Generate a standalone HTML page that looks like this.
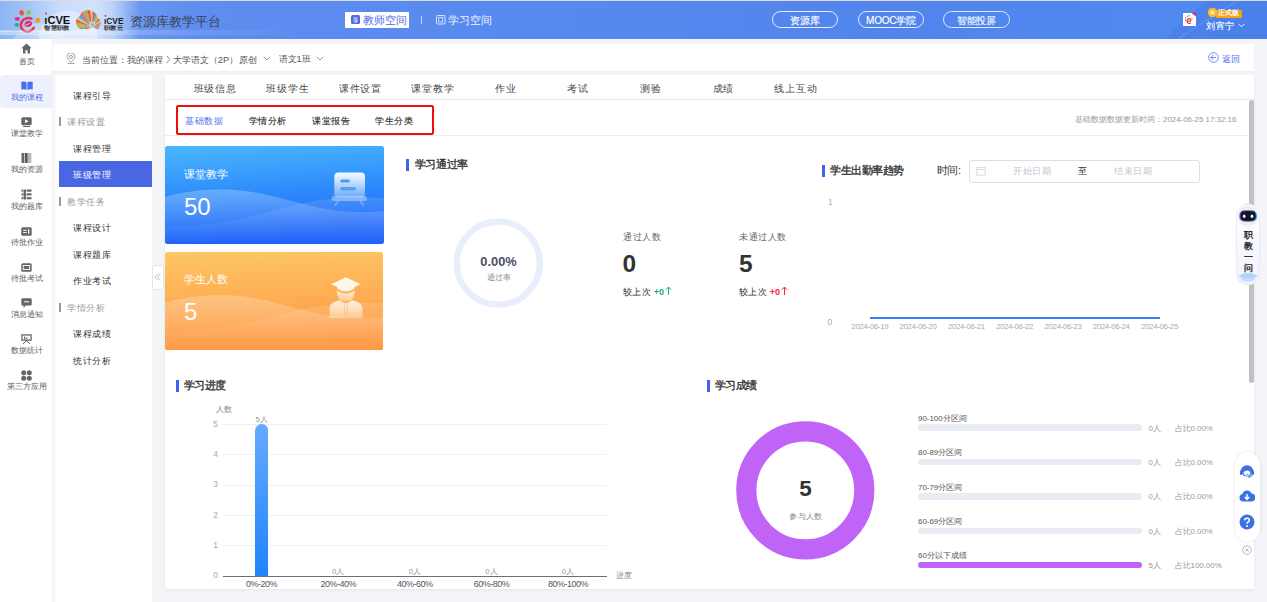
<!DOCTYPE html>
<html><head><meta charset="utf-8">
<style>
*{margin:0;padding:0;box-sizing:border-box}
html,body{width:1267px;height:602px;overflow:hidden}
body{position:relative;background:#f4f5f9;font-family:"Liberation Sans",sans-serif;color:#333}
.a{position:absolute;white-space:nowrap;line-height:1}
#topline{left:0;top:0;width:1267px;height:1px;background:#dedbe8}
#hdr{left:0;top:1px;width:1267px;height:38px;overflow:hidden;
 background:linear-gradient(90deg,#8db5f2 0px,#a5c6f5 30px,#c9ddfa 60px,#d0e2fb 95px,#bed5f8 112px,#8fb3f3 127px,#6996f0 140px,#5d8def 200px,#5788ee 600px,#4a80ea 1267px)}
#side{left:0;top:39px;width:53px;height:563px;background:#fff;box-shadow:1px 0 2px rgba(0,0,0,.04)}
#crumb{left:53px;top:44px;width:1201px;height:27px;background:#fff;box-shadow:0 1px 2px rgba(0,0,0,.04)}
#sub{left:53px;top:75px;width:99px;height:527px;background:#fff}
#main{left:165px;top:75px;width:1089px;height:514px;background:#fff;box-shadow:0 1px 3px rgba(0,0,0,.07)}
</style></head><body>
<div class="a" id="topline"></div>
<div class="a" id="hdr"></div>
<div class="a" id="side"></div>
<div class="a" id="crumb"></div>
<div class="a" id="sub"></div>
<div class="a" id="main"></div>
<div class="a" style="left:50px;top:39px;width:3px;height:563px;background:linear-gradient(90deg,rgba(0,0,0,0),rgba(0,0,0,.03))"></div>
<div class="a" style="left:53px;top:75px;width:4px;height:527px;background:linear-gradient(90deg,rgba(0,0,0,.045),rgba(0,0,0,0))"></div>

<!-- header content -->
<svg class="a" style="left:0;top:1px" width="260" height="38" viewBox="0 0 260 38">
 <defs>
  <clipPath id="shell"><path d="M80 28 C74 24 75 17 80 15 C81 10 86 8.5 90 9.5 C95 10.5 97 14 97.5 17 C101 17.5 101.5 24 99 27 L98 28Z"/></clipPath>
  <radialGradient id="cloud" cx="0.5" cy="1" r="0.8"><stop offset="0" stop-color="#fff" stop-opacity="0.9"/><stop offset="1" stop-color="#fff" stop-opacity="0"/></radialGradient>
 </defs>
 <circle cx="68" cy="40" r="30" fill="#fff" opacity="0.35"/><circle cx="40" cy="52" r="30" fill="#fff" opacity="0.25"/>
 <rect x="0" y="30" width="60" height="1" fill="#fff" opacity="0.3"/>
 <!-- logo1 -->
 <ellipse cx="21.6" cy="11.8" rx="2.2" ry="2.8" fill="#f0513f" transform="rotate(-20 21.6 11.8)"/>
 <ellipse cx="28.8" cy="11.6" rx="2.2" ry="2.5" fill="#8dc63f"/>
 <ellipse cx="17.3" cy="17.8" rx="2.6" ry="1.9" fill="#e2278b"/>
 <ellipse cx="16.8" cy="23.8" rx="2.3" ry="1.9" fill="#1fb28f"/>
 <ellipse cx="37.6" cy="19.3" rx="2.4" ry="2.6" fill="#f59c1a"/>
 <path d="M31.5 17.6 C26 15.5 20.5 19.5 20.8 24.5 C21 29 25.5 31.5 29.5 30.3 C31.5 29.7 33 28.3 33.8 26.8" stroke="#e8304f" stroke-width="2.3" fill="none" stroke-linecap="round"/>
 <path d="M24.5 24.3 C24.5 20.5 28.5 18.8 31 20.5 C33 22 31.8 25.2 28.8 25.8 C27 26.1 25.7 25.6 24.5 24.3Z" fill="#e3246a"/>
 <path d="M25.5 24.2 C27.5 23.5 29 22.8 30.2 21.8" stroke="#fff" stroke-width="0.8" fill="none"/>
 <!-- iCVE text 1 -->
 <circle cx="46" cy="12.5" r="1" fill="#e6262e"/>
 <text x="44.3" y="22.6" font-family="Liberation Sans" font-weight="bold" font-size="10.5" fill="#111" textLength="26" lengthAdjust="spacingAndGlyphs">ıCVE</text>
 <text x="44.3" y="29" font-size="6" font-weight="bold" fill="#333" textLength="25.5" lengthAdjust="spacingAndGlyphs">智慧职教</text>
 <!-- shell logo -->
 <g clip-path="url(#shell)"><path d="M92 26 L66.0 41.0 L63.9 36.5Z" fill="#f2c230"/><path d="M92 26 L63.9 36.5 L62.6 31.7Z" fill="#e8457a"/><path d="M92 26 L62.6 31.7 L62.0 26.8Z" fill="#37b8a8"/><path d="M92 26 L62.0 26.8 L62.3 21.8Z" fill="#f59a2e"/><path d="M92 26 L62.3 21.8 L63.4 17.0Z" fill="#8cc63f"/><path d="M92 26 L63.4 17.0 L65.3 12.4Z" fill="#ef4d6a"/><path d="M92 26 L65.3 12.4 L67.9 8.2Z" fill="#f7c843"/><path d="M92 26 L67.9 8.2 L71.2 4.4Z" fill="#2fb1d6"/><path d="M92 26 L71.2 4.4 L75.0 1.3Z" fill="#e45c9c"/><path d="M92 26 L75.0 1.3 L79.3 -1.2Z" fill="#f08a3a"/><path d="M92 26 L79.3 -1.2 L84.0 -2.9Z" fill="#7cc54a"/><path d="M92 26 L84.0 -2.9 L88.9 -3.8Z" fill="#e9436f"/><path d="M92 26 L88.9 -3.8 L93.8 -3.9Z" fill="#f2c230"/><path d="M92 26 L93.8 -3.9 L98.7 -3.2Z" fill="#e8457a"/><path d="M92 26 L98.7 -3.2 L103.5 -1.7Z" fill="#37b8a8"/><path d="M92 26 L103.5 -1.7 L107.9 0.6Z" fill="#f59a2e"/><path d="M92 26 L107.9 0.6 L111.9 3.5Z" fill="#8cc63f"/><path d="M92 26 L111.9 3.5 L115.3 7.1Z" fill="#ef4d6a"/><path d="M92 26 L115.3 7.1 L118.1 11.2Z" fill="#f7c843"/><path d="M92 26 L118.1 11.2 L120.2 15.7Z" fill="#2fb1d6"/><path d="M92 26 L120.2 15.7 L121.5 20.5Z" fill="#e45c9c"/><path d="M92 26 L121.5 20.5 L122.0 25.5Z" fill="#f08a3a"/><path d="M92 26 L122.0 25.5 L121.7 30.4Z" fill="#7cc54a"/><path d="M92 26 L121.7 30.4 L120.5 35.3Z" fill="#e9436f"/></g>
 <path d="M95 24 C95 21 91 20.5 90 23 C89 25.5 92 27 94 25.5" stroke="#b9e4f5" stroke-width="1.3" fill="none"/>
 <circle cx="105.5" cy="14.8" r="0.9" fill="#e6262e"/>
 <text x="104" y="22.6" font-family="Liberation Sans" font-weight="bold" font-size="9.8" fill="#1a1a1a" textLength="19.5" lengthAdjust="spacingAndGlyphs">ıCVE</text>
 <text x="104" y="29" font-size="6" font-weight="bold" fill="#333" textLength="19" lengthAdjust="spacingAndGlyphs">职教云</text>
</svg>
<div class="a" style="left:0;top:30px;width:300px;height:5px;background:linear-gradient(90deg,rgba(255,255,255,.35),rgba(255,255,255,.15) 150px,rgba(255,255,255,0) 300px)"></div>
<div class="a" style="left:130px;top:14.5px;font-size:13.2px;color:#3c414c">资源库教学平台</div>
<div class="a" style="left:345px;top:12px;width:64px;height:16px;background:#fff;border-radius:1px"></div>
<svg class="a" style="left:351px;top:15px" width="10" height="10" viewBox="0 0 10 10"><rect x="0" y="0" width="9" height="9" rx="1.5" fill="#4f6ce6"/><path d="M2.5 3 H6.5 M2.5 5 H6.5 L5 7 M3 7 H6" stroke="#fff" stroke-width="0.9" fill="none"/></svg>
<div class="a" style="left:363px;top:14.5px;font-size:10.6px;color:#4f6ce6">教师空间</div>
<div class="a" style="left:421px;top:16px;width:1px;height:8px;background:#c9d8fa"></div>
<svg class="a" style="left:436px;top:15px" width="10" height="10" viewBox="0 0 10 10"><rect x="0.5" y="0.5" width="8.5" height="8.5" rx="1" fill="none" stroke="#e3ebfd" stroke-width="0.9"/><rect x="2.7" y="2.5" width="4" height="4.5" fill="none" stroke="#e3ebfd" stroke-width="0.8"/></svg>
<div class="a" style="left:448px;top:14.5px;font-size:10.6px;color:#eef3fe">学习空间</div>
<div class="a" style="left:772px;top:11px;width:66px;height:17px;border:1px solid #e6eeff;border-radius:9px"></div>
<div class="a" style="left:858px;top:11px;width:66px;height:17px;border:1px solid #e6eeff;border-radius:9px"></div>
<div class="a" style="left:943px;top:11px;width:67px;height:17px;border:1px solid #e6eeff;border-radius:9px"></div>
<div class="a" style="left:772px;top:15.8px;width:66px;text-align:center;font-size:10px;letter-spacing:-0.2px;color:#fff;-webkit-text-stroke:0.15px #fff">资源库</div>
<div class="a" style="left:858px;top:15.8px;width:66px;text-align:center;font-size:10px;letter-spacing:-0.2px;color:#fff;-webkit-text-stroke:0.15px #fff">MOOC学院</div>
<div class="a" style="left:943px;top:15.8px;width:67px;text-align:center;font-size:10px;letter-spacing:-0.2px;color:#fff;-webkit-text-stroke:0.15px #fff">智能投屏</div>
<svg class="a" style="left:900px;top:1px" width="367" height="38" viewBox="0 0 367 38">
 <defs><linearGradient id="hl" x1="0" y1="0" x2="1" y2="0"><stop offset="0" stop-color="#5aa0ff" stop-opacity="0"/><stop offset="1" stop-color="#5aa0ff" stop-opacity="0.3"/></linearGradient></defs>
 <path d="M0 0 L305 0 L264.6 38 L0 38Z" fill="url(#hl)"/>
 <path d="M277.6 38 L336.5 0" stroke="#8cc0ff" stroke-opacity="0.45" stroke-width="0.8"/>
</svg>
<div class="a" style="left:1183px;top:13px;width:13px;height:13px;background:#fff"></div>
<svg class="a" style="left:1183px;top:13px" width="13" height="13" viewBox="0 0 13 13">
 <path d="M8.5 0 H13 V3.5Z" fill="#e0245e"/>
 <circle cx="4.5" cy="3.2" r="0.8" fill="#f15a4a"/><circle cx="6.5" cy="2.6" r="0.8" fill="#8cc63f"/>
 <circle cx="2.5" cy="5" r="0.7" fill="#e94f9b"/><circle cx="2.5" cy="7.2" r="0.7" fill="#2bb5a0"/><circle cx="9" cy="5.6" r="0.8" fill="#f7a42a"/>
 <path d="M4.5 9 C3 6 7 4.5 7.8 6.6 C8.5 8.4 6 9 5.4 7.6 M4 7 C3.5 10 6 11 8 10" stroke="#e8384f" stroke-width="1.2" fill="none"/>
</svg>
<div class="a" style="left:1216px;top:9.5px;width:26px;height:8px;background:#f6a315;border-radius:1px"></div>
<svg class="a" style="left:1207px;top:7px" width="11" height="12" viewBox="0 0 11 12"><circle cx="5.5" cy="5.5" r="4.8" fill="#f8b632"/><circle cx="5.5" cy="5.5" r="2.8" fill="#fcd25c"/><path d="M5.5 3.8 L6 5 L7.2 5.1 L6.3 5.9 L6.6 7.1 L5.5 6.4 L4.4 7.1 L4.7 5.9 L3.8 5.1 L5 5Z" fill="#fff"/></svg>
<div class="a" style="left:1218px;top:10px;font-size:6.8px;color:#fff;font-weight:bold">正式版</div>
<div class="a" style="left:1206px;top:22px;font-size:9px;letter-spacing:0.5px;color:#fff;-webkit-text-stroke:0.15px #fff">刘宵宁</div>
<svg class="a" style="left:1238px;top:23px" width="7" height="5" viewBox="0 0 7 5"><path d="M0.8 1 L3.5 3.8 L6.2 1" stroke="#fff" stroke-width="0.9" fill="none"/></svg>


<!-- sidebar -->
<div class="a" style="left:0;top:75px;width:53px;height:33px;background:#edf1fd;border-radius:4px 0 0 4px"></div>
<svg class="a" style="left:21px;top:43px" width="11" height="11" viewBox="0 0 11 11"><path d="M5.5 0.5 L10.6 5.2 L9 5.2 L9 10.5 L6.6 10.5 L6.6 7.3 L4.4 7.3 L4.4 10.5 L2 10.5 L2 5.2 L0.4 5.2Z" fill="#666"/></svg>
<div class="a" style="left:18.5px;top:57.8px;font-size:7.9px;color:#5c5c5c">首页</div>
<svg class="a" style="left:20.5px;top:81px" width="12" height="9" viewBox="0 0 12 9"><path d="M0.3 1 Q3 0 5.6 1.2 L5.6 8.8 Q3 7.8 0.3 8.6Z M6.4 1.2 Q9 0 11.7 1 L11.7 8.6 Q9 7.8 6.4 8.8Z" fill="#4d6ef0"/></svg>
<div class="a" style="left:10.5px;top:93.6px;font-size:7.9px;color:#4d6ef0">我的课程</div>
<svg class="a" style="left:21px;top:116.5px" width="11" height="10" viewBox="0 0 11 10"><rect x="0.3" y="0.3" width="10.4" height="8" rx="1.5" fill="#666"/><path d="M4 2.3 L7.5 4.3 L4 6.3Z" fill="#fff"/><rect x="2" y="9" width="7" height="1" fill="#666"/></svg>
<div class="a" style="left:10.5px;top:129.6px;font-size:7.9px;color:#5c5c5c">课堂教学</div>
<svg class="a" style="left:21px;top:152.5px" width="11" height="10" viewBox="0 0 11 10"><rect x="0.5" y="0" width="2.8" height="10" fill="#666"/><rect x="3.9" y="0" width="2.8" height="10" fill="#5a5a5a"/><rect x="7.4" y="0" width="1.2" height="10" fill="#888"/><rect x="9.2" y="0" width="1.1" height="10" fill="#aaa"/></svg>
<div class="a" style="left:10.5px;top:166.3px;font-size:7.9px;color:#5c5c5c">我的资源</div>
<svg class="a" style="left:21px;top:188.5px" width="11" height="11" viewBox="0 0 11 11"><rect x="0.5" y="0.5" width="10" height="2.2" fill="#666"/><rect x="0.5" y="4.3" width="10" height="2.2" fill="#666"/><rect x="0.5" y="8.1" width="10" height="2.2" fill="#666"/><rect x="1.9" y="0" width="0.7" height="11" fill="#fff"/><rect x="4.9" y="0" width="0.7" height="11" fill="#fff"/><rect x="2.6" y="1" width="2.3" height="9.5" rx="1" fill="#666"/></svg>
<div class="a" style="left:10.5px;top:202.8px;font-size:7.9px;color:#5c5c5c">我的题库</div>
<svg class="a" style="left:21px;top:226.5px" width="11" height="9" viewBox="0 0 11 9"><rect x="0.3" y="0.3" width="10.4" height="8.4" rx="1.5" fill="#666"/><rect x="2.2" y="2.8" width="3.4" height="1" fill="#fff"/><rect x="2.2" y="5" width="3.4" height="1" fill="#fff"/><rect x="7" y="2.3" width="1.3" height="4.4" fill="#fff"/></svg>
<div class="a" style="left:10.5px;top:238.8px;font-size:7.9px;color:#5c5c5c">待批作业</div>
<svg class="a" style="left:21px;top:262.5px" width="11" height="9" viewBox="0 0 11 9"><rect x="0.3" y="0.3" width="10.4" height="8.4" rx="1.5" fill="#666"/><rect x="2.2" y="2.5" width="6.5" height="4" fill="none" stroke="#fff" stroke-width="0.9"/></svg>
<div class="a" style="left:10.5px;top:274.8px;font-size:7.9px;color:#5c5c5c">待批考试</div>
<svg class="a" style="left:21px;top:298px" width="11" height="10" viewBox="0 0 11 10"><path d="M1.5 0.3 H9.5 Q10.7 0.3 10.7 1.5 V6.3 Q10.7 7.5 9.5 7.5 H5 L2.5 9.7 V7.5 H1.5 Q0.3 7.5 0.3 6.3 V1.5 Q0.3 0.3 1.5 0.3Z" fill="#666"/><rect x="3" y="3.3" width="5" height="1" fill="#fff"/></svg>
<div class="a" style="left:10.5px;top:310.8px;font-size:7.9px;color:#5c5c5c">消息通知</div>
<svg class="a" style="left:21px;top:334px" width="11" height="10" viewBox="0 0 11 10"><rect x="0.3" y="0.3" width="10.4" height="6.5" fill="#666"/><rect x="1.6" y="1.6" width="7.8" height="3.9" fill="#fff"/><rect x="3" y="2.5" width="1.2" height="3" fill="#666"/><rect x="5.2" y="3.3" width="1.2" height="2.2" fill="#666"/><path d="M5.5 6.8 L2 9.8 M5.5 6.8 L9 9.8" stroke="#666" stroke-width="1"/></svg>
<div class="a" style="left:10.5px;top:346.8px;font-size:7.9px;color:#5c5c5c">数据统计</div>
<svg class="a" style="left:21px;top:370px" width="11" height="11" viewBox="0 0 11 11"><circle cx="2.7" cy="2.7" r="2.5" fill="#666"/><circle cx="8.3" cy="2.7" r="2.5" fill="#666"/><circle cx="2.7" cy="8.3" r="2.5" fill="#666"/><circle cx="8.3" cy="8.3" r="2.5" fill="#666"/></svg>
<div class="a" style="left:6.5px;top:382.8px;font-size:7.9px;color:#5c5c5c">第三方应用</div>

<!-- breadcrumb -->
<svg class="a" style="left:66px;top:52.5px" width="10" height="11" viewBox="0 0 10 11"><path d="M5 9.3 C2 6.5 1 5 1 3.8 A4 4 0 0 1 9 3.8 C9 5 8 6.5 5 9.3Z" fill="none" stroke="#888" stroke-width="0.8"/><circle cx="5" cy="3.9" r="1.5" fill="none" stroke="#888" stroke-width="0.8"/><path d="M1.5 10.4 H8.5" stroke="#888" stroke-width="0.8"/></svg>
<div class="a" style="left:82px;top:55px;font-size:9.2px;color:#555">当前位置：我的课程<svg style="display:inline-block;vertical-align:-1px;margin:0 2.5px 0 2.5px" width="4.5" height="9" viewBox="0 0 4.5 9"><path d="M0.6 0.8 L3.9 4.5 L0.6 8.2" stroke="#666" stroke-width="0.8" fill="none"/></svg>大学语文<span style="letter-spacing:0.2px">（2P）</span>原创</div>
<div class="a" style="left:278.5px;top:55px;font-size:9.2px;color:#555">语文1班</div>
<svg class="a" style="left:263px;top:56px" width="8" height="5" viewBox="0 0 8 5"><path d="M0.7 0.7 L4 4 L7.3 0.7" stroke="#888" stroke-width="0.8" fill="none"/></svg>
<svg class="a" style="left:316px;top:56px" width="8" height="5" viewBox="0 0 8 5"><path d="M0.7 0.7 L4 4 L7.3 0.7" stroke="#888" stroke-width="0.8" fill="none"/></svg>
<svg class="a" style="left:1208px;top:52px" width="11" height="11" viewBox="0 0 11 11"><circle cx="5.5" cy="5.5" r="4.8" fill="none" stroke="#4d6ef0" stroke-width="0.8"/><path d="M3 5.5 H8 M5.2 3 L2.8 5.5 L5.2 8" stroke="#4d6ef0" stroke-width="0.8" fill="none"/></svg>
<div class="a" style="left:1222px;top:55px;font-size:9.2px;color:#4d6ef0">返回</div>

<!-- submenu -->
<div class="a" style="left:73px;top:91.6px;font-size:9px;letter-spacing:0.5px;color:#333">课程引导</div>
<div class="a" style="left:59px;top:117px;width:2px;height:9px;background:#999"></div>
<div class="a" style="left:67px;top:117.6px;font-size:9px;letter-spacing:0.5px;color:#999">课程设置</div>
<div class="a" style="left:73px;top:144.6px;font-size:9px;letter-spacing:0.5px;color:#333">课程管理</div>
<div class="a" style="left:59px;top:161px;width:93px;height:26px;background:#4a67e3"></div>
<div class="a" style="left:73px;top:171.1px;font-size:9px;letter-spacing:0.5px;color:#fff">班级管理</div>
<div class="a" style="left:59px;top:197px;width:2px;height:9px;background:#999"></div>
<div class="a" style="left:67px;top:197.6px;font-size:9px;letter-spacing:0.5px;color:#999">教学任务</div>
<div class="a" style="left:73px;top:224.1px;font-size:9px;letter-spacing:0.5px;color:#333">课程设计</div>
<div class="a" style="left:73px;top:250.6px;font-size:9px;letter-spacing:0.5px;color:#333">课程题库</div>
<div class="a" style="left:73px;top:277.1px;font-size:9px;letter-spacing:0.5px;color:#333">作业考试</div>
<div class="a" style="left:59px;top:302.5px;width:2px;height:9px;background:#999"></div>
<div class="a" style="left:67px;top:303.6px;font-size:9px;letter-spacing:0.5px;color:#999">学情分析</div>
<div class="a" style="left:73px;top:330.1px;font-size:9px;letter-spacing:0.5px;color:#333">课程成绩</div>
<div class="a" style="left:73px;top:356.6px;font-size:9px;letter-spacing:0.5px;color:#333">统计分析</div>
<div class="a" style="left:152px;top:265px;width:12px;height:25px;background:#fff;border:1px solid #e4e6ec;border-radius:2px"></div>
<svg class="a" style="left:153px;top:272px" width="10" height="10" viewBox="0 0 10 10"><path d="M5 1.5 L2 5 L5 8.5 M7.5 1.5 L4.5 5 L7.5 8.5" stroke="#aaa" stroke-width="0.7" fill="none"/></svg>


<!-- tabs -->
<div class="a" style="left:165px;top:98.5px;width:1089px;height:1px;background:#e3e6ee"></div>
<div class="a" style="left:178.9px;top:84px;width:72.6px;text-align:center;font-size:10px;letter-spacing:0.8px;color:#4a4a4a">班级信息</div>
<div class="a" style="left:251.5px;top:84px;width:72.6px;text-align:center;font-size:10px;letter-spacing:0.8px;color:#4a4a4a">班级学生</div>
<div class="a" style="left:324.1px;top:84px;width:72.6px;text-align:center;font-size:10px;letter-spacing:0.8px;color:#4a4a4a">课件设置</div>
<div class="a" style="left:396.7px;top:84px;width:72.6px;text-align:center;font-size:10px;letter-spacing:0.8px;color:#4a4a4a">课堂教学</div>
<div class="a" style="left:469.3px;top:84px;width:72.6px;text-align:center;font-size:10px;letter-spacing:0.8px;color:#4a4a4a">作业</div>
<div class="a" style="left:541.9px;top:84px;width:72.6px;text-align:center;font-size:10px;letter-spacing:0.8px;color:#4a4a4a">考试</div>
<div class="a" style="left:614.5px;top:84px;width:72.6px;text-align:center;font-size:10px;letter-spacing:0.8px;color:#4a4a4a">测验</div>
<div class="a" style="left:687.1px;top:84px;width:72.6px;text-align:center;font-size:10px;letter-spacing:0.8px;color:#4a4a4a">成绩</div>
<div class="a" style="left:759.7px;top:84px;width:72.6px;text-align:center;font-size:10px;letter-spacing:0.8px;color:#4a4a4a">线上互动</div>

<div class="a" style="left:165px;top:134.5px;width:1083px;height:1px;background:#ebedf2"></div>
<div class="a" style="left:176px;top:105px;width:258px;height:30px;border:2px solid #f20d0d;border-radius:2px"></div>
<div class="a" style="left:185px;top:117px;font-size:9px;letter-spacing:0.5px;color:#4d6ef0">基础数据</div>
<div class="a" style="left:248.5px;top:117px;font-size:9px;letter-spacing:0.5px;color:#2a2a2a;-webkit-text-stroke:0.12px #2a2a2a">学情分析</div>
<div class="a" style="left:312px;top:117px;font-size:9px;letter-spacing:0.5px;color:#2a2a2a;-webkit-text-stroke:0.12px #2a2a2a">课堂报告</div>
<div class="a" style="left:375px;top:117px;font-size:9px;letter-spacing:0.5px;color:#2a2a2a;-webkit-text-stroke:0.12px #2a2a2a">学生分类</div>
<div class="a" style="left:1075px;top:116px;font-size:7.9px;color:#999">基础数据数据更新时间：2024-06-25 17:32:16</div>
<div class="a" style="left:1248.5px;top:100px;width:5.5px;height:283px;background:#c1c1c1;border-radius:3px"></div>


<!-- stat cards -->
<svg class="a" style="left:165px;top:146px" width="219" height="98" viewBox="0 0 219 98">
 <defs>
  <linearGradient id="gb" x1="0" y1="0" x2="0.15" y2="1"><stop offset="0" stop-color="#49b8ff"/><stop offset="0.5" stop-color="#2f8dfb"/><stop offset="1" stop-color="#1f62f9"/></linearGradient>
  <linearGradient id="gwa" x1="0" y1="0" x2="0" y2="1"><stop offset="0" stop-color="#fff" stop-opacity="0.26"/><stop offset="0.6" stop-color="#fff" stop-opacity="0.1"/><stop offset="1" stop-color="#fff" stop-opacity="0"/></linearGradient>
  <linearGradient id="gwb" x1="0" y1="0" x2="0" y2="1"><stop offset="0" stop-color="#fff" stop-opacity="0.12"/><stop offset="1" stop-color="#fff" stop-opacity="0"/></linearGradient>
  <linearGradient id="gi" x1="0" y1="0" x2="0" y2="1"><stop offset="0" stop-color="#fff" stop-opacity="0.97"/><stop offset="1" stop-color="#fff" stop-opacity="0.3"/></linearGradient>
  <clipPath id="cb"><rect width="219" height="98" rx="2.5"/></clipPath>
 </defs>
 <g clip-path="url(#cb)">
 <rect width="219" height="98" fill="url(#gb)"/>
 <path d="M0 51 C20 45 45 42.5 70 44 C110 47 140 62 175 65 C195 67 210 66 219 65 L219 98 L0 98Z" fill="url(#gwa)"/>
 <path d="M0 81 C60 80 100 67 135 58 C165 51 195 51 219 52 L219 98 L0 98Z" fill="url(#gwb)"/>
 </g>
 <rect x="169.3" y="26.6" width="30.7" height="25" rx="4" fill="url(#gi)"/>
 <rect x="175.3" y="33.6" width="9.6" height="3" rx="1.5" fill="#4a9bfc"/>
 <rect x="175.3" y="41" width="15.7" height="3.4" rx="1.7" fill="#4a9bfc" opacity="0.9"/>
 <rect x="166.7" y="50" width="35.3" height="5" rx="2.5" fill="#fff" opacity="0.35"/>
 <path d="M173 55.5 L170.5 59 M195.5 55.5 L198 59" stroke="#fff" stroke-opacity="0.22" stroke-width="2.2" stroke-linecap="round"/>
</svg>
<div class="a" style="left:184px;top:168.5px;font-size:11px;color:#fff">课堂教学</div>
<div class="a" style="left:184px;top:194.5px;font-size:24px;color:#fff">50</div>

<svg class="a" style="left:165px;top:251.5px" width="218" height="98.5" viewBox="0 0 218 98.5">
 <defs>
  <linearGradient id="go" x1="0" y1="0" x2="0.1" y2="1"><stop offset="0" stop-color="#fdc764"/><stop offset="0.5" stop-color="#feae54"/><stop offset="1" stop-color="#ff9844"/></linearGradient>
  <clipPath id="co"><rect width="218" height="98.5" rx="2.5"/></clipPath>
 </defs>
 <g clip-path="url(#co)">
 <rect width="218" height="98.5" fill="url(#go)"/>
 <path d="M0 51 C20 45 45 42 70 43.5 C110 47 140 62 175 65 C195 67 210 66 218 65 L218 98.5 L0 98.5Z" fill="url(#gwa)"/>
 <path d="M0 80.5 C60 80 100 67 135 58 C165 51 195 51 218 51 L218 98.5 L0 98.5Z" fill="url(#gwb)"/>
 </g>
 <defs><linearGradient id="gi2" x1="0" y1="0" x2="0" y2="1"><stop offset="0" stop-color="#fff" stop-opacity="0.8"/><stop offset="1" stop-color="#fff" stop-opacity="0.35"/></linearGradient></defs>
 <path d="M166 32.3 L180.8 25.2 L195.7 32.3 L180.8 38.8Z" fill="#fff" fill-opacity="0.88"/>
 <path d="M172.3 33.5 L172.3 36.8 Q180.8 42.3 189.3 36.8 L189.3 33.5 L180.8 38.8Z" fill="#fff" fill-opacity="0.8"/>
 <path d="M171.8 38.6 Q180.8 44.6 189.8 38.6 Q190 49.6 180.8 49.6 Q171.6 49.6 171.8 38.6Z" fill="url(#gi2)"/>
 <path d="M164.6 66 L164.6 56.5 Q164.6 51.2 171 49.3 L174.5 48.2 Q177.5 50.5 180.8 51.2 Q184.1 50.5 187.1 48.2 L190.6 49.3 Q197.5 51.2 197.5 56.5 L197.5 66Z" fill="url(#gi2)"/>
 <path d="M179.3 51.5 L179.8 64 M182.3 51.5 L181.8 64" stroke="#feb055" stroke-opacity="0.7" stroke-width="0.7"/>
</svg>
<div class="a" style="left:183.5px;top:274px;font-size:11px;color:#fff">学生人数</div>
<div class="a" style="left:184px;top:300px;font-size:24px;color:#fff">5</div>

<!-- pass rate -->
<div class="a" style="left:406px;top:159px;width:3px;height:12px;background:#3f63f0"></div>
<div class="a" style="left:414.5px;top:159.0px;font-size:11px;letter-spacing:-0.3px;color:#333;-webkit-text-stroke:0.35px #333">学习通过率</div>
<svg class="a" style="left:448px;top:213px" width="101" height="101" viewBox="0 0 101 101"><circle cx="50.3" cy="50.2" r="41.5" fill="none" stroke="#e8eefb" stroke-width="6.3"/></svg>
<div class="a" style="left:448px;top:256px;width:101px;text-align:center;font-size:12.8px;color:#4a5068;font-weight:bold">0.00%</div>
<div class="a" style="left:448px;top:274px;width:101px;text-align:center;font-size:7.9px;color:#888">通过率</div>

<div class="a" style="left:623px;top:233px;font-size:9px;letter-spacing:0.5px;color:#666">通过人数</div>
<div class="a" style="left:622.5px;top:251.5px;font-size:24.5px;color:#333;font-weight:bold">0</div>
<div class="a" style="left:623px;top:285.5px;font-size:9px;letter-spacing:0.3px;color:#333">较上次 <b style="color:#18b17f;letter-spacing:0">+0</b><svg style="display:inline-block;vertical-align:-0.5px;margin-left:1.5px" width="7" height="9" viewBox="0 0 7 9"><path d="M3.5 9 V1.2 M0.8 3.8 L3.5 1 L6.2 3.8" stroke="#18b17f" stroke-width="1" fill="none"/></svg></div>
<div class="a" style="left:739px;top:233px;font-size:9px;letter-spacing:0.5px;color:#666">未通过人数</div>
<div class="a" style="left:739px;top:251.5px;font-size:24.5px;color:#333;font-weight:bold">5</div>
<div class="a" style="left:739px;top:285.5px;font-size:9px;letter-spacing:0.3px;color:#333">较上次 <b style="color:#f5222d;letter-spacing:0">+0</b><svg style="display:inline-block;vertical-align:-0.5px;margin-left:1.5px" width="7" height="9" viewBox="0 0 7 9"><path d="M3.5 9 V1.2 M0.8 3.8 L3.5 1 L6.2 3.8" stroke="#f5222d" stroke-width="1" fill="none"/></svg></div>

<!-- attendance -->
<div class="a" style="left:822px;top:164.5px;width:3px;height:12px;background:#3f63f0"></div>
<div class="a" style="left:830px;top:164.5px;font-size:11px;letter-spacing:-0.5px;color:#333;-webkit-text-stroke:0.35px #333">学生出勤率趋势</div>
<div class="a" style="left:936.5px;top:165px;font-size:11px;letter-spacing:-0.3px;color:#333">时间:</div>
<div class="a" style="left:969px;top:159.5px;width:231px;height:23px;border:1px solid #dcdfe6;border-radius:3px"></div>
<svg class="a" style="left:976px;top:166px" width="10" height="10" viewBox="0 0 10 10"><rect x="0.8" y="1.3" width="8.4" height="7.8" fill="none" stroke="#c8ccd4" stroke-width="0.7"/><path d="M0.8 3.5 H9.2" stroke="#c8ccd4" stroke-width="0.7"/></svg>
<div class="a" style="left:1013px;top:167px;font-size:9px;letter-spacing:0.5px;color:#c0c4cc">开始日期</div>
<div class="a" style="left:1078px;top:167px;font-size:9px;color:#333">至</div>
<div class="a" style="left:1114px;top:167px;font-size:9px;letter-spacing:0.5px;color:#c0c4cc">结束日期</div>
<div class="a" style="left:828px;top:197.5px;font-size:8.5px;color:#aaa">1</div>
<div class="a" style="left:827.5px;top:317.5px;font-size:8.5px;color:#aaa">0</div>
<div class="a" style="left:869.5px;top:317px;width:290px;height:2.4px;background:#3a7cf4"></div>
<div class="a" style="left:839.8px;top:323px;width:60px;text-align:center;font-size:7.8px;letter-spacing:-0.3px;color:#aaa">2024-06-19</div>
<div class="a" style="left:888.0px;top:323px;width:60px;text-align:center;font-size:7.8px;letter-spacing:-0.3px;color:#aaa">2024-06-20</div>
<div class="a" style="left:936.4px;top:323px;width:60px;text-align:center;font-size:7.8px;letter-spacing:-0.3px;color:#aaa">2024-06-21</div>
<div class="a" style="left:984.6px;top:323px;width:60px;text-align:center;font-size:7.8px;letter-spacing:-0.3px;color:#aaa">2024-06-22</div>
<div class="a" style="left:1033.0px;top:323px;width:60px;text-align:center;font-size:7.8px;letter-spacing:-0.3px;color:#aaa">2024-06-23</div>
<div class="a" style="left:1081.2px;top:323px;width:60px;text-align:center;font-size:7.8px;letter-spacing:-0.3px;color:#aaa">2024-06-24</div>
<div class="a" style="left:1129.5px;top:323px;width:60px;text-align:center;font-size:7.8px;letter-spacing:-0.3px;color:#aaa">2024-06-25</div>

<!-- progress chart -->
<div class="a" style="left:175.5px;top:380px;width:3px;height:12px;background:#3f63f0"></div>
<div class="a" style="left:183.5px;top:380.0px;font-size:11px;letter-spacing:-0.4px;color:#333;-webkit-text-stroke:0.35px #333">学习进度</div>
<div class="a" style="left:215.5px;top:406.3px;font-size:7.8px;color:#888">人数</div>
<div class="a" style="left:203.5px;top:571.2px;width:14.5px;text-align:right;font-size:8.5px;color:#aaa">0</div>
<div class="a" style="left:223px;top:545.4px;width:384px;height:1px;background:#eef0f6"></div>
<div class="a" style="left:203.5px;top:540.9px;width:14.5px;text-align:right;font-size:8.5px;color:#aaa">1</div>
<div class="a" style="left:223px;top:515.0px;width:384px;height:1px;background:#eef0f6"></div>
<div class="a" style="left:203.5px;top:510.5px;width:14.5px;text-align:right;font-size:8.5px;color:#aaa">2</div>
<div class="a" style="left:223px;top:484.7px;width:384px;height:1px;background:#eef0f6"></div>
<div class="a" style="left:203.5px;top:480.2px;width:14.5px;text-align:right;font-size:8.5px;color:#aaa">3</div>
<div class="a" style="left:223px;top:454.3px;width:384px;height:1px;background:#eef0f6"></div>
<div class="a" style="left:203.5px;top:449.8px;width:14.5px;text-align:right;font-size:8.5px;color:#aaa">4</div>
<div class="a" style="left:223px;top:424.0px;width:384px;height:1px;background:#eef0f6"></div>
<div class="a" style="left:203.5px;top:419.5px;width:14.5px;text-align:right;font-size:8.5px;color:#aaa">5</div>
<div class="a" style="left:223px;top:575.7px;width:384px;height:1px;background:#6e7079"></div>

<svg class="a" style="left:255px;top:424px" width="13.3" height="152" viewBox="0 0 13.3 152"><defs><linearGradient id="gbar" x1="0" y1="0" x2="0" y2="1"><stop offset="0" stop-color="#66aafd"/><stop offset="1" stop-color="#1f84fd"/></linearGradient></defs><path d="M0 6.65 A6.65 6.65 0 0 1 13.3 6.65 L13.3 152 L0 152Z" fill="url(#gbar)"/></svg>
<div class="a" style="left:231.6px;top:579.8px;width:60px;text-align:center;font-size:9px;letter-spacing:-0.5px;color:#555">0%-20%</div>
<div class="a" style="left:231.6px;top:415.5px;width:60px;text-align:center;font-size:7.8px;color:#999">5人</div>
<div class="a" style="left:308.2px;top:579.8px;width:60px;text-align:center;font-size:9px;letter-spacing:-0.5px;color:#555">20%-40%</div>
<div class="a" style="left:308.2px;top:567.5px;width:60px;text-align:center;font-size:7.8px;color:#999">0人</div>
<div class="a" style="left:384.8px;top:579.8px;width:60px;text-align:center;font-size:9px;letter-spacing:-0.5px;color:#555">40%-60%</div>
<div class="a" style="left:384.8px;top:567.5px;width:60px;text-align:center;font-size:7.8px;color:#999">0人</div>
<div class="a" style="left:461.4px;top:579.8px;width:60px;text-align:center;font-size:9px;letter-spacing:-0.5px;color:#555">60%-80%</div>
<div class="a" style="left:461.4px;top:567.5px;width:60px;text-align:center;font-size:7.8px;color:#999">0人</div>
<div class="a" style="left:538.0px;top:579.8px;width:60px;text-align:center;font-size:9px;letter-spacing:-0.5px;color:#555">80%-100%</div>
<div class="a" style="left:538.0px;top:567.5px;width:60px;text-align:center;font-size:7.8px;color:#999">0人</div>
<div class="a" style="left:616px;top:572px;font-size:7.8px;color:#888">进度</div>

<!-- scores -->
<div class="a" style="left:706.5px;top:380px;width:3px;height:12px;background:#3f63f0"></div>
<div class="a" style="left:714.5px;top:380.0px;font-size:11px;letter-spacing:-0.4px;color:#333;-webkit-text-stroke:0.35px #333">学习成绩</div>
<svg class="a" style="left:735px;top:420px" width="141" height="141" viewBox="0 0 141 141"><circle cx="70.3" cy="70.3" r="59" fill="none" stroke="#c064f8" stroke-width="20.2"/></svg>
<div class="a" style="left:765.5px;top:477.5px;width:80px;text-align:center;font-size:22.5px;color:#333;font-weight:bold">5</div>
<div class="a" style="left:766px;top:512.5px;width:80px;text-align:center;font-size:7.9px;letter-spacing:0.3px;color:#888">参与人数</div>
<div class="a" style="left:918px;top:414.9px;font-size:7.9px;color:#555">90-100分区间</div>
<div class="a" style="left:918px;top:424.4px;width:224px;height:6.6px;border-radius:3.3px;background:#e9ecf3"></div>
<div class="a" style="left:1148.5px;top:424.7px;font-size:7.9px;color:#999">0人</div>
<div class="a" style="left:1174.5px;top:424.7px;font-size:7.9px;color:#999">占比0.00%</div>
<div class="a" style="left:918px;top:449.2px;font-size:7.9px;color:#555">80-89分区间</div>
<div class="a" style="left:918px;top:458.8px;width:224px;height:6.6px;border-radius:3.3px;background:#e9ecf3"></div>
<div class="a" style="left:1148.5px;top:459.1px;font-size:7.9px;color:#999">0人</div>
<div class="a" style="left:1174.5px;top:459.1px;font-size:7.9px;color:#999">占比0.00%</div>
<div class="a" style="left:918px;top:483.6px;font-size:7.9px;color:#555">70-79分区间</div>
<div class="a" style="left:918px;top:493.1px;width:224px;height:6.6px;border-radius:3.3px;background:#e9ecf3"></div>
<div class="a" style="left:1148.5px;top:493.4px;font-size:7.9px;color:#999">0人</div>
<div class="a" style="left:1174.5px;top:493.4px;font-size:7.9px;color:#999">占比0.00%</div>
<div class="a" style="left:918px;top:518.0px;font-size:7.9px;color:#555">60-69分区间</div>
<div class="a" style="left:918px;top:527.5px;width:224px;height:6.6px;border-radius:3.3px;background:#e9ecf3"></div>
<div class="a" style="left:1148.5px;top:527.8px;font-size:7.9px;color:#999">0人</div>
<div class="a" style="left:1174.5px;top:527.8px;font-size:7.9px;color:#999">占比0.00%</div>
<div class="a" style="left:918px;top:552.3px;font-size:7.9px;color:#555">60分以下成绩</div>
<div class="a" style="left:918px;top:561.8px;width:224px;height:6.6px;border-radius:3.3px;background:#c264f8"></div>
<div class="a" style="left:1148.5px;top:562.1px;font-size:7.9px;color:#999">5人</div>
<div class="a" style="left:1174.5px;top:562.1px;font-size:7.9px;color:#999">占比100.00%</div>

<!-- floating widgets -->
<svg class="a" style="left:1236px;top:203px" width="24" height="83" viewBox="0 0 24 83">
 <defs><linearGradient id="gr" x1="0" y1="0" x2="0" y2="1"><stop offset="0" stop-color="#fff"/><stop offset="1" stop-color="#f3f0fd"/></linearGradient>
 <linearGradient id="gv" x1="0" y1="0" x2="1" y2="0"><stop offset="0" stop-color="#7b5cf0"/><stop offset="0.5" stop-color="#1b2244"/><stop offset="1" stop-color="#30a8e0"/></linearGradient></defs>
 <rect x="0.5" y="1" width="23" height="81" rx="11.5" fill="url(#gr)" stroke="#e6e4f4" stroke-width="0.8"/>
 <path d="M11.3 2 L12 -3" stroke="#ddd" stroke-width="0.8"/>
 <circle cx="12" cy="13" r="10.5" fill="#efeff3"/>
 <rect x="3.3" y="7.6" width="17.6" height="10.8" rx="4.5" fill="url(#gv)"/>
 <rect x="4.5" y="8.6" width="15.2" height="8.8" rx="3.8" fill="#111627"/>
 <ellipse cx="8.2" cy="13.2" rx="1.3" ry="1.8" fill="#fff"/><ellipse cx="16" cy="13.2" rx="1.3" ry="1.8" fill="#fff"/>
 <path d="M2 73 Q12 67 22 73 Q12 79 2 73Z" fill="#8ec5fb" opacity="0.7"/>
 <path d="M4 76 Q12 72 20 76 Q12 82 4 76Z" fill="#b9dcfd" opacity="0.8"/>
</svg>
<div class="a" style="left:1243.5px;top:229.5px;font-size:9px;color:#222;-webkit-text-stroke:0.35px #222;line-height:11px;white-space:normal;width:11px">职<br>教<br>一<br>问</div>

<div class="a" style="left:1235px;top:452px;width:25px;height:90px;background:#fff;border-radius:12.5px;box-shadow:0 0 3px rgba(0,0,0,.12)"></div>
<svg class="a" style="left:1239px;top:463px" width="16" height="16" viewBox="0 0 16 16">
 <path d="M2.2 9 A5.8 5.8 0 0 1 13.8 9" fill="none" stroke="#3a72e6" stroke-width="1.7"/>
 <circle cx="8" cy="8.6" r="5" fill="#3a72e6"/>
 <path d="M4.6 9.2 C5.5 8 7 7.6 8.6 7.4 C9.8 7.6 10.8 8.2 11.4 9.2 C11.3 11.5 9.8 12.8 8 12.8 C6.2 12.8 4.7 11.5 4.6 9.2Z" fill="#fff"/>
 <rect x="1" y="7.6" width="2.6" height="4.4" rx="1.2" fill="#3a72e6"/><rect x="12.4" y="7.6" width="2.6" height="4.4" rx="1.2" fill="#3a72e6"/>
 <path d="M13.6 11.5 Q13 14.3 9 14.3" stroke="#3a72e6" stroke-width="1" fill="none"/>
 <path d="M6.8 11 Q8 11.8 9.2 11" stroke="#3a72e6" stroke-width="0.7" fill="none"/>
</svg>
<svg class="a" style="left:1239px;top:489px" width="16" height="14" viewBox="0 0 16 14"><path d="M4 12.5 A3.8 3.8 0 0 1 3.5 5 A4.8 4.8 0 0 1 12.5 4.5 A4 4 0 0 1 12 12.5Z" fill="#3a72e6"/><path d="M8 5 V10 M5.8 8 L8 10.3 L10.2 8" stroke="#fff" stroke-width="1.5" fill="none"/></svg>
<svg class="a" style="left:1239px;top:514px" width="16" height="16" viewBox="0 0 16 16"><circle cx="8" cy="8" r="7.5" fill="#3a72e6"/><path d="M5.7 6.2 C5.7 3.6 10.3 3.6 10.3 6.2 C10.3 7.9 8 8 8 9.8" stroke="#fff" stroke-width="1.6" fill="none"/><circle cx="8" cy="12" r="1" fill="#fff"/></svg>
<svg class="a" style="left:1242px;top:545px" width="10" height="10" viewBox="0 0 10 10"><circle cx="5" cy="5" r="4.3" fill="none" stroke="#999" stroke-width="0.7"/><path d="M3.3 3.3 L6.7 6.7 M6.7 3.3 L3.3 6.7" stroke="#999" stroke-width="0.7"/></svg>

</body></html>
